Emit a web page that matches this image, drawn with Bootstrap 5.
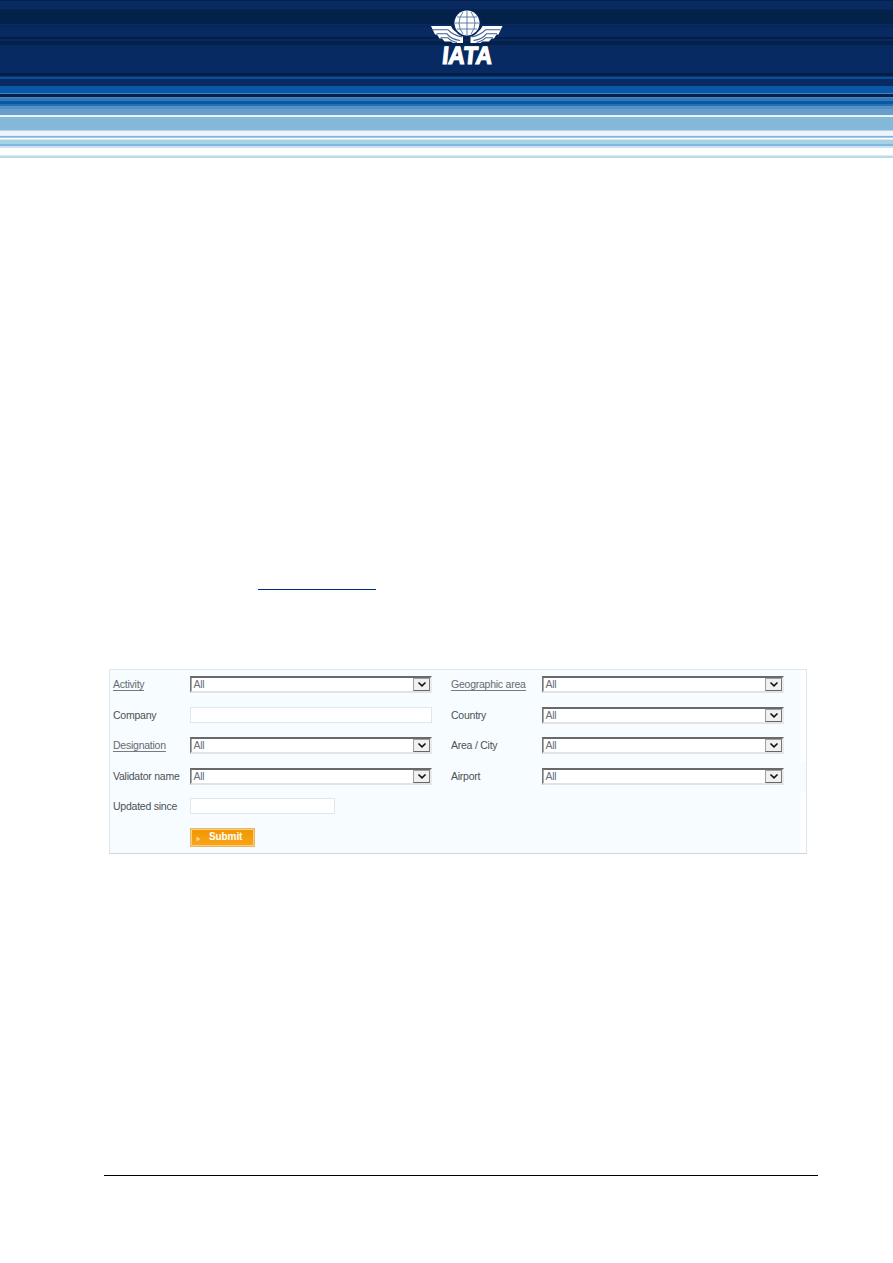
<!DOCTYPE html>
<html lang="en">
<head>
<meta charset="utf-8">
<title>IATA</title>
<link href="https://cdn.jsdelivr.net/npm/bootstrap@5.3.0/dist/css/bootstrap.min.css" rel="stylesheet">
<style>
body{font-family:"Liberation Sans",Arial,sans-serif;font-size:10.5px;letter-spacing:-.24px;line-height:16px;color:#555a5e;background:#fff;height:1263px;overflow:hidden}
.banner{height:160px;padding-top:9px;background:linear-gradient(#03214f 0 1px,#082a60 1px 9px,#05234f 9px 11px,#04214a 11px 24px,#082a60 24px 26px,#05234f 26px 27px,#082a62 27px 37px,#031f48 37px 39px,#082a60 39px 41px,#04214a 41px 45px,#082a62 45px 73px,#031f48 73px 76px,#08386f 76px 77px,#0b4f9b 77px 79px,#082a62 79px 86px,#0a57a5 86px 93px,#3f87bd 93px 94px,#05204a 94px 97px,#4787bd 97px 98px,#3478b5 98px 101px,#0a57a5 101px 104px,#2470b4 104px 106px,#5b93c8 106px 107px,#4f93c0 107px 109px,#6a9dcb 109px 115px,#e6f5fa 115px 117px,#83b8d9 117px 130px,#b4d4e8 130px 131px,#eef4fb 131px 135px,#e1eefa 135px 136px,#7fb3da 136px 137px,#a7cce5 137px 138px,#fff 138px 139px,#d5eaf3 139px 140px,#a5d2e6 140px 144px,#84b5dc 144px 146px,#c9e3f5 146px 148px,#fff 148px 155px,#dceff5 155px 156px,#b8dcec 156px 158px,#fff 158px)}
.link-rule{width:118px;height:1px;background:#002a80;margin:429px 0 0 258px}
.search-panel{width:698px;height:185px;margin:79px 0 0 109px;border:1px solid #dde7ea;border-bottom-color:#c9d6df;background:linear-gradient(#f5fbff,#f5fbff) right 92px/6px 30px no-repeat,linear-gradient(90deg,#f6fcff 690px,#fcfeff 690px)}
.fields{display:grid;grid-template-columns:77px 242px 19px 91px 242px;grid-template-rows:31px 30px 31px 30px 30px 20px;padding:6px 0 0 3px}
.fields label,.fields a{color:#4d5155;white-space:nowrap;justify-self:start;align-self:start;line-height:12px;margin-top:2px}
.fields a{color:#666a6e;text-decoration:none;border-bottom:1px solid #777b7e;height:13px}
.pick{height:17px;background:#fff;border:1px solid #9a9a9a;border-top:2px solid #696969;border-left-color:#777;border-right:2px solid #ebebeb;border-bottom:2px solid #e3e3e3;box-shadow:inset 1px 0 #aaa;padding-left:2.5px;line-height:12px;color:#667078}
.arrow{width:17px;height:13px;background:#f0f0f0;border:1px solid #a0a0a0;border-right-color:#777;border-bottom-color:#666}
.entry{height:16px;padding:0;border:1px solid #dde8eb;border-radius:0;background:#fff}
.send{width:65px;height:19px;border:1px solid #e9b75e;box-shadow:inset 0 0 0 1px #fbcf83;background:linear-gradient(#ef9700,#faa51a);border-radius:0;color:#fff;font-size:10px;letter-spacing:-.1px;font-weight:700;line-height:14px;padding:0 0 2px 5px}
.footer-rule{width:714px;height:1px;background:#000;margin:321px 0 0 104px}
</style>
</head>
<body>
<svg class="d-none"><symbol id="chevron" viewBox="0 0 10 7"><path d="M1.500 1.500L5 4.800L8.500 1.500" fill="none" stroke="#111" stroke-width="1.600"/></symbol></svg>
<header class="banner d-flex justify-content-center align-items-start">
<svg width="72" height="64" viewBox="0 0 72 64" style="margin-left:40px">
<defs><g id="wing">
<path d="M0 17H20Q22 23 32 26V34H22L20 32.5H13.5L11 29.5H8.5L6 25.5H4Z" fill="#fff"/>
<path d="M2 20.8H17Q22 26 31 28M5.500 24.800H16Q20 30 29 31.500M9.500 28.800H17Q20 32 26 33.500" fill="none" stroke="#405f8c" stroke-width="1.100"/>
</g></defs>
<use href="#wing"/><use href="#wing" transform="matrix(-1 0 0 1 71.500 0)"/>
<circle cx="36" cy="14.500" r="13.800" fill="#082a62"/>
<circle cx="36" cy="14" r="12.500" fill="#fff"/>
<path d="M36 2V26M26 8H46M24 14H48M26 20H46M32 3Q24 14 32 25M40 3Q48 14 40 25" fill="none" stroke="#54739d" stroke-width=".9"/>
<text transform="translate(10.500 55.200) skewX(-6)" x="0" y="0" textLength="50" lengthAdjust="spacingAndGlyphs" letter-spacing="0" font-family="Liberation Sans" font-size="25" font-weight="700" fill="#fff" stroke="#fff" stroke-width="1.200">IATA</text>
</svg>
</header>
<main>
<div class="link-rule"></div>
<form class="search-panel">
<div class="fields">
<a href="#">Activity</a><div class="pick d-flex justify-content-between"><span>All</span><span class="arrow d-flex align-items-center justify-content-center"><svg width="10" height="7"><use href="#chevron"/></svg></span></div><span></span>
<a href="#">Geographic area</a><div class="pick d-flex justify-content-between"><span>All</span><span class="arrow d-flex align-items-center justify-content-center"><svg width="10" height="7"><use href="#chevron"/></svg></span></div>
<label for="company">Company</label><input id="company" class="entry"><span></span>
<label>Country</label><div class="pick d-flex justify-content-between"><span>All</span><span class="arrow d-flex align-items-center justify-content-center"><svg width="10" height="7"><use href="#chevron"/></svg></span></div>
<a href="#">Designation</a><div class="pick d-flex justify-content-between"><span>All</span><span class="arrow d-flex align-items-center justify-content-center"><svg width="10" height="7"><use href="#chevron"/></svg></span></div><span></span>
<label>Area / City</label><div class="pick d-flex justify-content-between"><span>All</span><span class="arrow d-flex align-items-center justify-content-center"><svg width="10" height="7"><use href="#chevron"/></svg></span></div>
<label>Validator name</label><div class="pick d-flex justify-content-between"><span>All</span><span class="arrow d-flex align-items-center justify-content-center"><svg width="10" height="7"><use href="#chevron"/></svg></span></div><span></span>
<label>Airport</label><div class="pick d-flex justify-content-between"><span>All</span><span class="arrow d-flex align-items-center justify-content-center"><svg width="10" height="7"><use href="#chevron"/></svg></span></div>
<label for="since">Updated since</label><input id="since" class="entry" style="width:145px"><span></span><span></span><span></span>
<span></span><button type="button" class="send d-flex align-items-center"><svg width="5" height="6" viewBox="0 0 5 6" class="mt-1"><path d="M.5 .5L4.5 3L.5 5.5Z" fill="#ffd591"/></svg><span style="margin-left:8px">Submit</span></button>
</div>
</form>
</main>
<div class="footer-rule"></div>
<script src="https://cdn.jsdelivr.net/npm/bootstrap@5.3.0/dist/js/bootstrap.bundle.min.js"></script>
</body>
</html>
